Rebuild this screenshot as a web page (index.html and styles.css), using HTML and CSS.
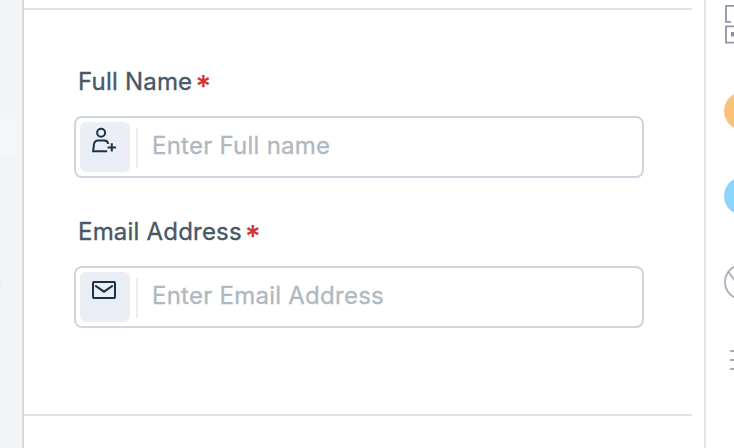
FILE: index.html
```
<!DOCTYPE html>
<html lang="en">
<head>
<meta charset="utf-8">
<title>Contact form</title>
<link rel="stylesheet" href="styles.css">
</head>
<body>
<div class="app">
  <aside class="sidebar"><div class="sidebar-item"></div><i class="dot"></i></aside>
  <main class="main">
    <form class="form">
      <div class="field">
        <label class="label" for="name"><span class="label-text">Full Name</span><span class="required">*</span></label>
        <div class="control">
          <span class="icon-box">
            <svg width="50" height="50" fill="none" stroke="currentColor" stroke-width="2">
              <circle cx="21.1" cy="10.7" r="4"/>
              <path d="M27.2 29.2H13.1l.9-7c.3-2.4 1.6-3.8 4-3.8h6.2c2.4 0 3.7 1 4 3.4M31.8 21.2v8.4M27.6 25.5H36"/>
            </svg>
          </span>
          <span class="separator"></span>
          <input class="input" id="name" type="text" placeholder="Enter Full name">
        </div>
      </div>
      <div class="field">
        <label class="label" for="email"><span class="label-text">Email Address</span><span class="required">*</span></label>
        <div class="control">
          <span class="icon-box">
            <svg width="50" height="50" fill="none" stroke="currentColor" stroke-width="2">
              <rect x="13" y="10" width="22" height="16" rx="1"/>
              <path d="M15.2 13.7l8.8 6 8.8-6"/>
            </svg>
          </span>
          <span class="separator"></span>
          <input class="input" id="email" type="text" placeholder="Enter Email Address">
        </div>
      </div>
    </form>
  </main>
  <aside class="rail">
    <svg class="qr" width="40" height="40" fill="none" stroke="#9195a9" stroke-width="1.8">
      <path d="M7 16.8H2V.9h15v9M2 21.4h15v16.2H2zM23 .9h15v16H23z"/>
      <path d="M7 27h5v4.5H7z" fill="#8c90a5" stroke="none"/>
    </svg>
    <span class="bubble orange"></span>
    <span class="bubble blue"></span>
    <svg class="globe" width="36" height="36" fill="none" stroke="#b0b1be" stroke-width="2">
      <circle cx="18" cy="18" r="17"/><path d="M4.5 8L18 26"/>
    </svg>
    <div class="menu"><i></i><i></i><i></i></div>
  </aside>
</div>
</body>
</html>
```
FILE: styles.css
```
* { box-sizing: border-box; }
body { margin: 0; background: #fff; font-family: Inter, "Liberation Sans", sans-serif; }
.app { display: flex; width: 734px; height: 448px; overflow: hidden; }
.sidebar { flex: 0 0 24px; padding-top: 113px; background: #f2f4f6; border-right: 2px solid #d6dadf; }
.sidebar-item { height: 42px; background: #f4f6f8; }
.dot { display: block; width: 1px; height: 4px; margin-top: 127px; background: #e9ebef; }
.main { flex: 0 0 680px; padding: 8px 12px 32px 0; }
.form { height: 408px; padding: 56px 48px 0 50px; border: solid #e2e2e6; border-width: 2px 0; }
.field { height: 150px; }
.label { display: flex; height: 50px; padding-left: 4px; color: #475866; font-size: 24px; font-weight: 400; line-height: 32px; white-space: nowrap; }
.label-text { letter-spacing: 0.2px; -webkit-text-stroke: 0.35px currentColor; }
.required { margin-left: 3px; padding-top: 4px; color: #cf3832; font-size: 30px; font-weight: 600; }
.control { display: flex; align-items: center; height: 62px; padding-left: 4px; border: 2px solid #d0d5df; border-radius: 8px; }
.icon-box { flex: 0 0 50px; height: 50px; border-radius: 6px; background: #ebeef4; color: #1c3347; }
.icon-box svg { display: block; }
.separator { width: 2px; height: 40px; margin: 2px 0 0 6px; background: #ebeef3; }
.input { flex: 1; min-width: 0; height: 56px; padding: 0 14px 3px; border: 0; outline: 0; background: transparent; font: 400 24px/32px Inter, "Liberation Sans", sans-serif; letter-spacing: 0.25px; }
.input::placeholder { color: #b0b8c0; opacity: 1; -webkit-text-stroke: 0.3px #b0b8c0; }
.rail { flex: 0 0 30px; display: flex; flex-direction: column; align-items: flex-start; padding: 5px 0 0 18px; border-left: 2px solid #e2e2e6; overflow: hidden; }
.qr { flex: none; }
.bubble { flex: none; width: 38px; height: 38px; border-radius: 50%; }
.orange { margin-top: 47px; background: #f8c378; }
.blue { margin-top: 47px; background: #8bd6fa; }
.globe { flex: none; margin-top: 49px; }
.menu { display: grid; gap: 7px; margin: 50px 0 0 6px; }
.menu i { width: 22px; height: 2px; background: #a9acbb; }
```
